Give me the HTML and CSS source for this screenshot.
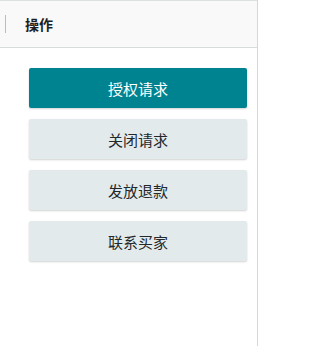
FILE: index.html
```html
<!DOCTYPE html>
<html lang="zh">
<head>
<meta charset="utf-8">
<link rel="stylesheet" href="styles.css">
</head>
<body>
<div class="panel">
  <div class="header">
    <span class="bar"></span>
    <span class="title">操作</span>
  </div>
  <div class="actions">
    <button class="btn primary">授权请求</button>
    <button class="btn">关闭请求</button>
    <button class="btn">发放退款</button>
    <button class="btn">联系买家</button>
  </div>
</div>
</body>
</html>
```
FILE: styles.css
```css
html, body {
  margin: 0;
  padding: 0;
  background: #ffffff;
  height: 100%;
}
body {
  font-family: "Noto Sans CJK SC", "Liberation Sans", sans-serif;
}
.panel {
  width: 257px;
  height: 346px;
  border-right: 1px solid #d4d8d9;
  box-sizing: content-box;
}
.header {
  height: 46px;
  border-top: 1px solid #dde1e2;
  border-bottom: 1px solid #d7dcdd;
  background: #f9f9f9;
  display: flex;
  align-items: center;
}
.bar {
  width: 1px;
  height: 18px;
  background: #b9bdbe;
  margin-left: 5px;
}
.title {
  margin-left: 19px;
  font-size: 14px;
  font-weight: 700;
  color: #1c1f22;
}
.actions {
  display: flex;
  flex-direction: column;
  gap: 11px;
  padding: 20px 0 0 29px;
}
.btn {
  width: 218px;
  height: 40px;
  border: none;
  border-radius: 2px;
  background: #e2eaec;
  color: #23282b;
  font-family: "Noto Sans CJK SC", "Liberation Sans", sans-serif;
  font-size: 15px;
  font-weight: 400;
  padding: 0;
  box-shadow: 0 1px 2px rgba(0, 0, 0, 0.18);
}
.btn.primary {
  background: #008391;
  color: #ffffff;
}
```
